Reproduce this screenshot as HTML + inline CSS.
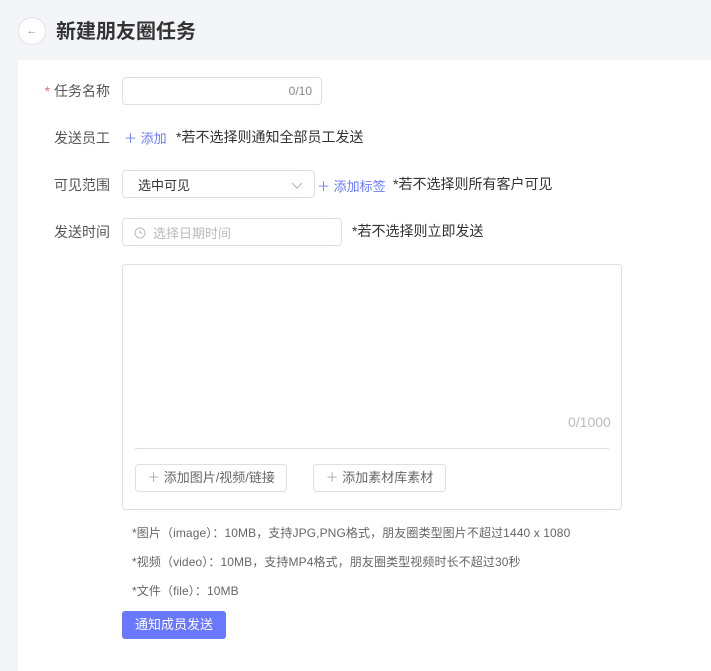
<!DOCTYPE html><html><head><meta charset="utf-8"><style>
*{box-sizing:border-box;margin:0;padding:0}
body{width:711px;height:671px;background:#f4f5f9;font-family:"Liberation Sans","Noto Sans CJK SC",sans-serif;position:relative;overflow:hidden;color:#333}
.a{position:absolute}
.back{left:18px;top:17px;width:28px;height:28px;border:1px solid #e3e4e8;border-radius:50%;background:#fff;color:#888;font-size:11px;text-align:center;line-height:26px}
.title{left:56px;top:15px;font-size:20px;font-weight:bold;color:#333}
.card{left:18px;top:60px;width:693px;height:611px;background:#fff}
.lbl{font-size:14px;color:#555;width:90px;text-align:right;left:20px}
.in{border:1px solid #dcdfe6;border-radius:4px;background:#fff}
.t{font-size:14px;color:#333}
.blue{color:#6b7bff;font-size:13px}
.note{font-size:12px;color:#666;left:132px;letter-spacing:0.1px}
</style></head><body>
<div class="a back">←</div>
<div class="a title">新建朋友圈任务</div>
<div class="a card"></div>
<div class="a lbl" style="top:81px"><span style="color:#f56c6c">* </span>任务名称</div>
<div class="a in" style="left:122px;top:77px;width:200px;height:28px"><span class="a" style="right:9px;top:6px;font-size:12px;color:#888">0/10</span></div>
<div class="a lbl" style="top:128px">发送员工</div>
<div class="a blue" style="left:124px;top:128px">＋ 添加</div>
<div class="a t" style="left:176px;top:127px">*若不选择则通知全部员工发送</div>
<div class="a lbl" style="top:175px">可见范围</div>
<div class="a in" style="left:122px;top:170px;width:193px;height:28px"><span class="a" style="left:15px;top:4px;font-size:13px">选中可见</span><svg class="a" style="right:11px;top:11px" width="12" height="7" viewBox="0 0 12 7"><path d="M1 1l5 5 5-5" fill="none" stroke="#bbb" stroke-width="1.2"/></svg></div>
<div class="a blue" style="left:317px;top:176px">＋ 添加标签</div>
<div class="a t" style="left:393px;top:174px">*若不选择则所有客户可见</div>
<div class="a lbl" style="top:222px">发送时间</div>
<div class="a in" style="left:122px;top:218px;width:220px;height:28px"><svg class="a" style="left:11px;top:8px" width="12" height="12" viewBox="0 0 12 12"><circle cx="6" cy="6" r="5" fill="none" stroke="#bbb"/><path d="M6 3v3h2.5" fill="none" stroke="#bbb"/></svg><span class="a" style="left:30px;top:4px;font-size:13px;color:#bbb">选择日期时间</span></div>
<div class="a t" style="left:352px;top:221px">*若不选择则立即发送</div>
<div class="a in" style="left:122px;top:264px;width:500px;height:246px"></div>
<div class="a" style="left:568px;top:414px;font-size:14px;color:#bbb">0/1000</div>
<div class="a" style="left:135px;top:448px;width:474px;height:1px;background:#dcdfe6"></div>
<div class="a in" style="left:135px;top:464px;width:152px;height:28px;font-size:13px;color:#666;text-align:center;line-height:26px"><span style="color:#aaa">＋</span> 添加图片/视频/链接</div>
<div class="a in" style="left:313px;top:464px;width:133px;height:28px;font-size:13px;color:#666;text-align:center;line-height:26px"><span style="color:#aaa">＋</span> 添加素材库素材</div>
<div class="a note" style="top:524px">*图片（image）：10MB，支持JPG,PNG格式，朋友圈类型图片不超过1440 x 1080</div>
<div class="a note" style="top:553px">*视频（video）：10MB，支持MP4格式，朋友圈类型视频时长不超过30秒</div>
<div class="a note" style="top:582px">*文件（file）：10MB</div>
<div class="a" style="left:122px;top:611px;width:104px;height:28px;background:#6a78fe;border-radius:3px;color:#fff;font-size:13px;text-align:center;line-height:28px">通知成员发送</div>
</body></html>
